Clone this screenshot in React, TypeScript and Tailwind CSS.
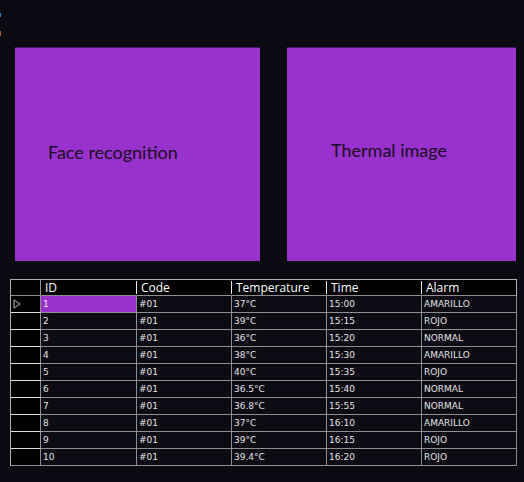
import React from "react";

const rows: string[][] = [
  ["1", "#01", "37°C", "15:00", "AMARILLO"],
  ["2", "#01", "39°C", "15:15", "ROJO"],
  ["3", "#01", "36°C", "15:20", "NORMAL"],
  ["4", "#01", "38°C", "15:30", "AMARILLO"],
  ["5", "#01", "40°C", "15:35", "ROJO"],
  ["6", "#01", "36.5°C", "15:40", "NORMAL"],
  ["7", "#01", "36.8°C", "15:55", "NORMAL"],
  ["8", "#01", "37°C", "16:10", "AMARILLO"],
  ["9", "#01", "39°C", "16:15", "ROJO"],
  ["10", "#01", "39.4°C", "16:20", "ROJO"],
];

const widths = ["w-[96px]", "w-[95px]", "w-[95px]", "w-[95px]", "w-[95px]"];
const headers = ["ID", "Code", "Temperature", "Time", "Alarm"];

export default function App() {
  return (
    <div className="relative w-[524px] h-[482px] overflow-hidden bg-[#0b0912]">
      <div className="absolute left-0 top-[13px] w-[1px] h-[4px] bg-[#3b82c4]" />
      <div className="absolute left-0 top-[31px] w-[1px] h-[5px] bg-[#b0602a]" />

      <div className="flex pt-[47px] pl-[15px] gap-[27px]">
        <div className="w-[245px] h-[214px] bg-[#9932cc] border-t border-[#4a1865]">
          <div
            className="pl-[33px] pt-[93px] text-[18px] leading-[22px] text-[#1a0c22]"
            style={{ fontFamily: "Lato, sans-serif" }}
          >
            Face recognition
          </div>
        </div>
        <div className="w-[229px] h-[214px] bg-[#9932cc] border-t border-[#4a1865]">
          <div
            className="pl-[44px] pt-[91px] text-[18px] leading-[22px] text-[#1a0c22]"
            style={{ fontFamily: "Lato, sans-serif" }}
          >
            Thermal image
          </div>
        </div>
      </div>

      <div className="ml-[10px] mt-[18px] w-[507px] border-l border-t border-[#b0b0b0] flex flex-col">
        {/* header */}
        <div className="flex h-[16px]">
          <div className="w-[30px] h-[16px] bg-black border-r border-b border-[#8f8f8f]" />
          {headers.map((h, i) => (
            <div
              key={h}
              className={`${widths[i]} relative h-[16px] bg-black border-b ${i === 4 ? "border-r border-[#b0b0b0]" : ""} border-b-[#8f8f8f] flex items-center pl-[4px] text-white text-[12px] leading-none`}
              style={{ fontFamily: "'Open Sans', sans-serif" }}
            >
              {i > 0 && (
                <span className="absolute left-[-1px] top-[1px] w-[1px] h-[13px] bg-[#e8e8e8]" />
              )}
              {h}
            </div>
          ))}
        </div>
        {rows.map((r, ri) => (
          <div key={ri} className="flex h-[17px]">
            <div
              className={`w-[30px] h-[17px] bg-black border-r border-[#8f8f8f] border-b ${ri < 9 ? "border-b-[#dcdcdc]" : "border-b-[#8f8f8f]"} flex items-center pl-[2px]`}
            >
              {ri === 0 && (
                <svg width="8" height="10" viewBox="0 0 8 10">
                  <polygon points="1,1 7,5 1,9" fill="none" stroke="#b8b8b8" strokeWidth="1" />
                </svg>
              )}
            </div>
            {r.map((c, ci) => (
              <div
                key={ci}
                className={`${widths[ci]} h-[17px] border-r border-b border-[#8f8f8f] flex items-center pl-[2px] text-[9px] leading-none ${ri === 0 && ci === 0 ? "bg-[#9932cc] text-[#efe6f5]" : "bg-[#0d0b14] text-[#e4e4e4]"}`}
                style={{ fontFamily: "'DejaVu Sans', sans-serif" }}
              >
                {c}
              </div>
            ))}
          </div>
        ))}
      </div>
    </div>
  );
}
